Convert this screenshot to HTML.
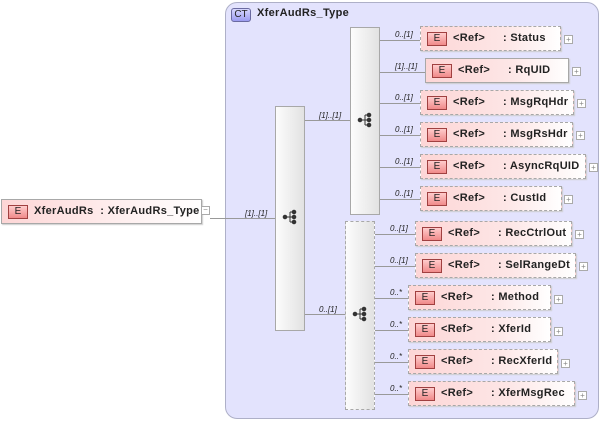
<!DOCTYPE html>
<html><head><meta charset="utf-8"><style>
*{margin:0;padding:0;box-sizing:border-box}
body{width:603px;height:423px;background:#fff;position:relative;overflow:hidden;font-family:"Liberation Sans",Arial,sans-serif}
.a{position:absolute}
.ct{left:225px;top:2px;width:374px;height:417px;background:#e3e3fd;border:1px solid #aeb0c8;border-radius:12px}
.ctb{left:231px;top:8px;width:20px;height:14px;border:1px solid #6a6aa0;border-radius:3px;background:linear-gradient(#d8d8ff,#9c9cf0);font-size:10px;color:#222;text-align:center;line-height:12px}
.ctt{left:257px;top:7px;font-size:11px;font-weight:bold;color:#222;letter-spacing:0.3px}
.seq{background:linear-gradient(90deg,#fcfcfc,#e2e2e2);border:1px solid #a8a8a8}
.dash{border:1px dashed #a8a8a8}
.el{height:25px;border:1px solid #a8a8a8;background:linear-gradient(90deg,#fdd6d6 0%,#fde6e6 60%,#fff 100%);box-shadow:1px 1px 1px #ccc}
.el.d{border:1px dashed #a8a8a8}
.e{position:absolute;left:6px;top:5px;width:20px;height:14px;border:1px solid #a04040;background:linear-gradient(#fcc,#f08a8a);font-size:10px;line-height:12px;text-align:center;color:#222}
.r{position:absolute;top:5px;left:32px;font-size:11px;font-weight:bold;color:#222;white-space:nowrap;letter-spacing:0.3px}
.n{position:absolute;top:5px;left:82px;font-size:11px;font-weight:bold;color:#222;white-space:nowrap;letter-spacing:0.3px}
.p{width:9px;height:9px;border:1px solid #aaa;background:#fff;font-size:8px;line-height:7px;text-align:center;color:#888}
.ln{height:1px;background:#999}
.c{font-size:8px;font-style:italic;color:#222}
</style></head><body>
<div class="a ct"></div>
<div class="a ctb">CT</div>
<div class="a ctt">XferAudRs_Type</div>

<div class="a el" style="left:1px;top:199px;width:201px;background:linear-gradient(90deg,#fdd6d6,#fff)"><div class="e">E</div><div class="r">XferAudRs&nbsp; :&nbsp;XferAudRs_Type</div></div>
<div class="a p" style="left:201px;top:206px;line-height:6px">−</div>
<div class="a ln" style="left:210px;top:218px;width:65px"></div>
<div class="a c" style="left:245px;top:209px">[1]..[1]</div>

<div class="a seq" style="left:275px;top:106px;width:30px;height:225px"></div>
<svg class="a" style="left:282px;top:209px" width="16" height="16"><g fill="#333" stroke="#333"><circle cx="3" cy="8" r="1.8"/><line x1="3" y1="8" x2="8" y2="8"/><line x1="8" y1="3" x2="8" y2="13"/><line x1="8" y1="3" x2="12" y2="3"/><line x1="8" y1="8" x2="12" y2="8"/><line x1="8" y1="13" x2="12" y2="13"/><circle cx="12" cy="3" r="1.8"/><circle cx="12" cy="8" r="1.8"/><circle cx="12" cy="13" r="1.8"/></g></svg>

<div class="a ln" style="left:305px;top:120px;width:45px"></div>
<div class="a c" style="left:319px;top:111px">[1]..[1]</div>
<div class="a ln" style="left:305px;top:314px;width:40px"></div>
<div class="a c" style="left:319px;top:305px">0..[1]</div>

<div class="a seq" style="left:350px;top:27px;width:30px;height:188px"></div>
<svg class="a" style="left:357px;top:112px" width="16" height="16"><g fill="#333" stroke="#333"><circle cx="3" cy="8" r="1.8"/><line x1="3" y1="8" x2="8" y2="8"/><line x1="8" y1="3" x2="8" y2="13"/><line x1="8" y1="3" x2="12" y2="3"/><line x1="8" y1="8" x2="12" y2="8"/><line x1="8" y1="13" x2="12" y2="13"/><circle cx="12" cy="3" r="1.8"/><circle cx="12" cy="8" r="1.8"/><circle cx="12" cy="13" r="1.8"/></g></svg>

<div class="a seq dash" style="left:345px;top:221px;width:30px;height:189px"></div>
<svg class="a" style="left:352px;top:306px" width="16" height="16"><g fill="#333" stroke="#333"><circle cx="3" cy="8" r="1.8"/><line x1="3" y1="8" x2="8" y2="8"/><line x1="8" y1="3" x2="8" y2="13"/><line x1="8" y1="3" x2="12" y2="3"/><line x1="8" y1="8" x2="12" y2="8"/><line x1="8" y1="13" x2="12" y2="13"/><circle cx="12" cy="3" r="1.8"/><circle cx="12" cy="8" r="1.8"/><circle cx="12" cy="13" r="1.8"/></g></svg>

<div class="a ln" style="left:380px;top:40px;width:40px"></div><div class="a c" style="left:395px;top:30px">0..[1]</div>
<div class="a el d" style="left:420px;top:26px;width:141px"><div class="e">E</div><div class="r">&lt;Ref&gt;</div><div class="n">: Status</div></div>
<div class="a p" style="left:564px;top:35px">+</div>

<div class="a ln" style="left:380px;top:72px;width:45px"></div><div class="a c" style="left:395px;top:62px">[1]..[1]</div>
<div class="a el" style="left:425px;top:58px;width:144px"><div class="e">E</div><div class="r">&lt;Ref&gt;</div><div class="n">: RqUID</div></div>
<div class="a p" style="left:572px;top:67px">+</div>

<div class="a ln" style="left:380px;top:103px;width:40px"></div><div class="a c" style="left:395px;top:93px">0..[1]</div>
<div class="a el d" style="left:420px;top:90px;width:154px"><div class="e">E</div><div class="r">&lt;Ref&gt;</div><div class="n">: MsgRqHdr</div></div>
<div class="a p" style="left:577px;top:99px">+</div>

<div class="a ln" style="left:380px;top:135px;width:40px"></div><div class="a c" style="left:395px;top:125px">0..[1]</div>
<div class="a el d" style="left:420px;top:122px;width:153px"><div class="e">E</div><div class="r">&lt;Ref&gt;</div><div class="n">: MsgRsHdr</div></div>
<div class="a p" style="left:576px;top:131px">+</div>

<div class="a ln" style="left:380px;top:167px;width:40px"></div><div class="a c" style="left:395px;top:157px">0..[1]</div>
<div class="a el d" style="left:420px;top:154px;width:166px"><div class="e">E</div><div class="r">&lt;Ref&gt;</div><div class="n">: AsyncRqUID</div></div>
<div class="a p" style="left:589px;top:163px">+</div>

<div class="a ln" style="left:380px;top:199px;width:40px"></div><div class="a c" style="left:395px;top:189px">0..[1]</div>
<div class="a el d" style="left:420px;top:186px;width:142px"><div class="e">E</div><div class="r">&lt;Ref&gt;</div><div class="n">: CustId</div></div>
<div class="a p" style="left:564px;top:195px">+</div>

<div class="a ln" style="left:375px;top:234px;width:40px"></div><div class="a c" style="left:390px;top:224px">0..[1]</div>
<div class="a el d" style="left:415px;top:221px;width:157px"><div class="e">E</div><div class="r">&lt;Ref&gt;</div><div class="n">: RecCtrlOut</div></div>
<div class="a p" style="left:575px;top:230px">+</div>

<div class="a ln" style="left:375px;top:266px;width:40px"></div><div class="a c" style="left:390px;top:256px">0..[1]</div>
<div class="a el d" style="left:415px;top:253px;width:161px"><div class="e">E</div><div class="r">&lt;Ref&gt;</div><div class="n">: SelRangeDt</div></div>
<div class="a p" style="left:579px;top:262px">+</div>

<div class="a ln" style="left:375px;top:298px;width:33px"></div><div class="a c" style="left:390px;top:288px">0..*</div>
<div class="a el d" style="left:408px;top:285px;width:143px"><div class="e">E</div><div class="r">&lt;Ref&gt;</div><div class="n">: Method</div></div>
<div class="a p" style="left:554px;top:295px">+</div>

<div class="a ln" style="left:375px;top:330px;width:33px"></div><div class="a c" style="left:390px;top:320px">0..*</div>
<div class="a el d" style="left:408px;top:317px;width:143px"><div class="e">E</div><div class="r">&lt;Ref&gt;</div><div class="n">: XferId</div></div>
<div class="a p" style="left:554px;top:327px">+</div>

<div class="a ln" style="left:375px;top:362px;width:33px"></div><div class="a c" style="left:390px;top:352px">0..*</div>
<div class="a el d" style="left:408px;top:349px;width:150px"><div class="e">E</div><div class="r">&lt;Ref&gt;</div><div class="n">: RecXferId</div></div>
<div class="a p" style="left:561px;top:359px">+</div>

<div class="a ln" style="left:375px;top:394px;width:33px"></div><div class="a c" style="left:390px;top:384px">0..*</div>
<div class="a el d" style="left:408px;top:381px;width:167px"><div class="e">E</div><div class="r">&lt;Ref&gt;</div><div class="n">: XferMsgRec</div></div>
<div class="a p" style="left:578px;top:391px">+</div>
</body></html>
